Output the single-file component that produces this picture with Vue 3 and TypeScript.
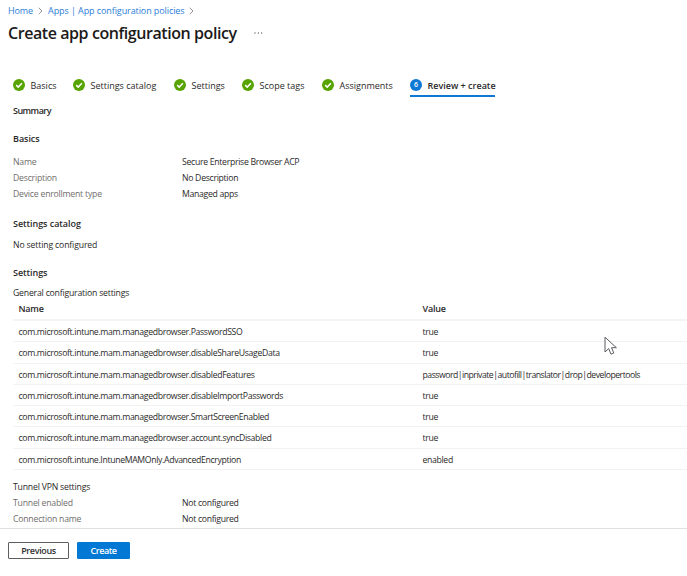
<script setup lang="ts">
const steps: string[] = ['Basics', 'Settings catalog', 'Settings', 'Scope tags', 'Assignments']

interface Pair {
  label: string
  value: string
}

const basics: Pair[] = [
  { label: 'Name', value: 'Secure Enterprise Browser ACP' },
  { label: 'Description', value: 'No Description' },
  { label: 'Device enrollment type', value: 'Managed apps' },
]

const settings: Pair[] = [
  { label: 'com.microsoft.intune.mam.managedbrowser.PasswordSSO', value: 'true' },
  { label: 'com.microsoft.intune.mam.managedbrowser.disableShareUsageData', value: 'true' },
  {
    label: 'com.microsoft.intune.mam.managedbrowser.disabledFeatures',
    value: 'password|inprivate|autofill|translator|drop|developertools',
  },
  { label: 'com.microsoft.intune.mam.managedbrowser.disableImportPasswords', value: 'true' },
  { label: 'com.microsoft.intune.mam.managedbrowser.SmartScreenEnabled', value: 'true' },
  { label: 'com.microsoft.intune.mam.managedbrowser.account.syncDisabled', value: 'true' },
  { label: 'com.microsoft.intune.IntuneMAMOnly.AdvancedEncryption', value: 'enabled' },
]

const tunnel: Pair[] = [
  { label: 'Tunnel enabled', value: 'Not configured' },
  { label: 'Connection name', value: 'Not configured' },
]
</script>

<template>
  <div class="page">
    <nav class="crumbs">
      <a>Home</a>
      <svg class="chevron" viewBox="0 0 5 8"><path d="M.7 .8 4 4 .7 7.2" /></svg>
      <a>Apps | App configuration policies</a>
      <svg class="chevron" viewBox="0 0 5 8"><path d="M.7 .8 4 4 .7 7.2" /></svg>
    </nav>

    <header class="title-row">
      <h1>Create app configuration policy</h1>
      <svg class="more" viewBox="0 0 9 2">
        <circle cx="1" cy="1" r=".65" /><circle cx="4.3" cy="1" r=".65" /><circle cx="7.6" cy="1" r=".65" />
      </svg>
    </header>

    <div class="steps">
      <div v-for="s in steps" :key="s" class="step">
        <svg class="badge" viewBox="0 0 12 12">
          <circle cx="6" cy="6" r="6" fill="#57a300" />
          <path d="M3.2 6.1 5.2 8.1 8.9 4.2" fill="none" stroke="#fff" stroke-width="1.5" />
        </svg>
        <span class="step-label">{{ s }}</span>
      </div>
      <div class="step current">
        <span class="badge number">6</span>
        <span class="step-label">Review + create</span>
      </div>
    </div>

    <main class="content">
      <h2 class="summary">Summary</h2>
      <h2 class="basics-title">Basics</h2>
      <dl class="pairs">
        <div v-for="p in basics" :key="p.label" class="pair">
          <dt>{{ p.label }}</dt>
          <dd>{{ p.value }}</dd>
        </div>
      </dl>

      <h2 class="catalog-title">Settings catalog</h2>
      <p class="catalog-text">No setting configured</p>

      <h2 class="settings-title">Settings</h2>
      <p class="general">General configuration settings</p>
      <div class="table">
        <div class="row head"><span>Name</span><span>Value</span></div>
        <div v-for="r in settings" :key="r.label" class="row">
          <span>{{ r.label }}</span><span :class="{ list: r.value.includes('|') }">{{ r.value }}</span>
        </div>
      </div>

      <p class="tunnel">Tunnel VPN settings</p>
      <dl class="pairs">
        <div v-for="p in tunnel" :key="p.label" class="pair">
          <dt>{{ p.label }}</dt>
          <dd>{{ p.value }}</dd>
        </div>
      </dl>
    </main>

    <footer class="footer">
      <button class="previous">Previous</button>
      <button class="create">Create</button>
    </footer>

    <svg class="cursor" viewBox="0 0 14 20">
      <path d="M1 1.2V16L4.7 12.6 7 18.2 9.8 17 7.5 11.7H12.4Z" />
    </svg>
  </div>
</template>

<style>
body {
  background: #fff;
}
</style>

<style scoped>
.page {
  position: relative;
  display: flex;
  flex-direction: column;
  box-sizing: border-box;
  width: 687px;
  height: 576px;
  overflow: hidden;
  background: #fff;
  color: #2b2a29;
  font-family: 'Open Sans', 'Noto Sans', sans-serif;
  font-size: 9px;
  line-height: 16px;
  letter-spacing: -0.2px;
  white-space: nowrap;
}
h1,
h2,
p,
dl,
dd {
  margin: 0;
}
.crumbs {
  display: flex;
  align-items: center;
  height: 21px;
  padding-left: 8px;
  color: #2a7dd8;
  letter-spacing: -0.09px;
}
.chevron {
  width: 5px;
  height: 8px;
  margin: 0 5px;
  fill: none;
  stroke: #8a8886;
  stroke-width: 0.9;
}
.chevron:last-child {
  margin-left: 4px;
}
.title-row {
  display: flex;
  align-items: center;
  height: 24px;
  padding-left: 8px;
}
h1 {
  color: #1b1a19;
  font-size: 16px;
  font-weight: 600;
  line-height: 24px;
  letter-spacing: -0.43px;
}
.more {
  width: 9px;
  height: 2px;
  margin-left: 17px;
  fill: #605e5c;
}
.steps {
  display: grid;
  grid-template-columns: 60px 101px 68px 80px 88px 85px;
  align-items: start;
  height: 22px;
  margin-top: 30px;
  padding-left: 13px;
}
.step {
  display: flex;
  align-items: center;
  gap: 5.5px;
  height: 20px;
  letter-spacing: 0;
}
.step-label {
  padding-top: 1px;
}
.badge {
  flex: none;
  width: 12px;
  height: 12px;
}
.current {
  border-bottom: 2px solid #0f78d4;
  font-weight: 600;
}
.number {
  border-radius: 50%;
  background: #0f78d4;
  color: #fff;
  font-size: 7px;
  line-height: 12px;
  text-align: center;
}
.content {
  display: flex;
  flex-direction: column;
  height: 431px;
  padding-left: 13px;
  font-size: 8.7px;
}
h2 {
  font-size: 9px;
  font-weight: 600;
  line-height: 16px;
  letter-spacing: -0.05px;
}
.summary {
  margin-top: 6px;
  letter-spacing: -0.55px;
}
.basics-title {
  margin-top: 12px;
  margin-bottom: 7px;
}
.pair {
  display: grid;
  grid-template-columns: 169px 1fr;
}
dt {
  color: #706e6b;
  letter-spacing: -0.22px;
}
dd {
  letter-spacing: -0.3px;
}
.catalog-title {
  margin-top: 14px;
}
.catalog-text {
  margin-top: 5px;
  letter-spacing: -0.15px;
}
.settings-title {
  margin-top: 12px;
}
.general {
  margin-top: 4px;
}
.row {
  display: grid;
  grid-template-columns: 404px 1fr;
  box-sizing: border-box;
  height: 21.3px;
  padding-left: 5.5px;
  border-bottom: 1px solid #f3f2f1;
  line-height: 23px;
  letter-spacing: -0.34px;
}
.list {
  letter-spacing: -0.5px;
}
.head {
  height: 20px;
  border-bottom: 2px solid #f5f4f3;
  font-size: 9px;
  font-weight: 600;
  line-height: 16px;
  letter-spacing: -0.2px;
}
.tunnel {
  margin-top: 9px;
}
.footer {
  display: flex;
  gap: 8px;
  padding: 13px 8px;
  border-top: 1px solid #e1e0df;
}
button {
  box-sizing: border-box;
  height: 17px;
  padding: 0;
  border: 1px solid #605e5c;
  border-radius: 1px;
  background: #fff;
  color: #323130;
  font: 600 9px/13px 'Open Sans', 'Noto Sans', sans-serif;
  letter-spacing: -0.35px;
}
.previous {
  width: 61px;
}
.create {
  width: 53px;
  border-color: #0078d4;
  background: #0078d4;
  color: #fff;
  letter-spacing: -0.45px;
}
.cursor {
  position: absolute;
  top: 336px;
  left: 604px;
  width: 14px;
  height: 20px;
  fill: #fff;
  stroke: #5b5b62;
  stroke-width: 1;
}
</style>
